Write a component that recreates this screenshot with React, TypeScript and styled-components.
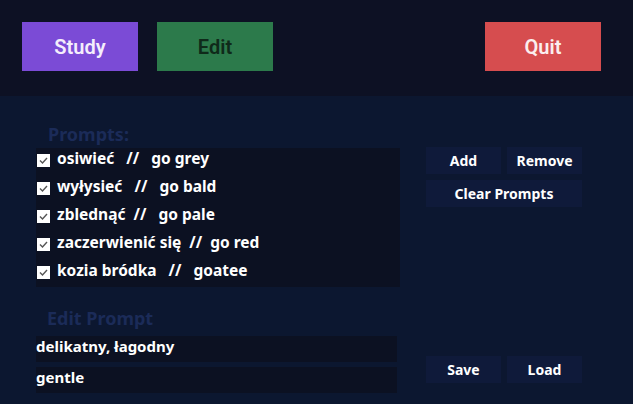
import React from "react";
import styled, { createGlobalStyle } from "styled-components";

const Global = createGlobalStyle`
  html, body { margin: 0; padding: 0; background: #0c1730; }
  body { width: 633px; height: 404px; overflow: hidden; }
  * { box-sizing: border-box; }
`;

const Page = styled.div`
  width: 633px;
  height: 404px;
  display: flex;
  flex-direction: column;
  background: #0c1730;
`;

const TopBar = styled.div`
  height: 96px;
  background: #0d1124;
  display: flex;
  align-items: flex-start;
  padding: 22px 32px 0 22px;
  gap: 19px;
`;

const NavButton = styled.button<{ $bg: string; $fg: string; $push?: boolean }>`
  width: 116px;
  height: 49px;
  border: none;
  background: ${(p) => p.$bg};
  color: ${(p) => p.$fg};
  font-family: Roboto, "Noto Sans", sans-serif;
  font-weight: 600;
  font-size: 20px;
  margin-left: ${(p) => (p.$push ? "auto" : "0")};
  padding: 0;
  cursor: pointer;
`;

const Main = styled.div`
  display: grid;
  grid-template-columns: 364px 156px;
  column-gap: 26px;
  padding-left: 36px;
`;

const Section = styled.div`
  display: flex;
  flex-direction: column;
`;

const SectionLabel = styled.div<{ $top: number; $left: number }>`
  margin-top: ${(p) => p.$top}px;
  margin-left: ${(p) => p.$left}px;
  height: 24px;
  line-height: 20px;
  font-family: "Noto Sans", sans-serif;
  font-weight: 700;
  font-size: 18px;
  color: #1b2b58;
`;

const ListBox = styled.div`
  width: 364px;
  height: 139px;
  background: #0c1122;
  display: flex;
  flex-direction: column;
  gap: 4px;
`;

const Row = styled.label`
  height: 24px;
  display: flex;
  align-items: center;
  gap: 7px;
  padding-left: 1px;
  padding-bottom: 4px;
  font-family: "Noto Sans", sans-serif;
  font-weight: 700;
  font-size: 15.5px;
  color: #ffffff;
  white-space: pre;
`;

const Check = styled.span`
  width: 13px;
  height: 13px;
  background: #ffffff;
  display: inline-flex;
  align-items: center;
  justify-content: center;
  flex: none;
  margin-top: 5px;
`;

const ButtonCol = styled.div<{ $top: number }>`
  padding-top: ${(p) => p.$top}px;
  display: grid;
  grid-template-columns: 75px 75px;
  column-gap: 6px;
  row-gap: 6px;
  align-content: start;
`;

const SmallButton = styled.button<{ $wide?: boolean }>`
  height: 27px;
  border: none;
  padding: 0 0 1px 0;
  background: #0f1a3a;
  color: #ffffff;
  font-family: "Noto Sans", sans-serif;
  font-weight: 700;
  font-size: 14px;
  grid-column: ${(p) => (p.$wide ? "1 / span 2" : "auto")};
`;

const Input = styled.input`
  width: 361px;
  height: 26px;
  border: none;
  outline: none;
  background: #0c1122;
  color: #ffffff;
  padding: 0 0 7px 0;
  font-family: "Noto Sans", sans-serif;
  font-weight: 700;
  font-size: 15px;
`;

const Inputs = styled.div`
  display: flex;
  flex-direction: column;
  gap: 5px;
  margin-top: 4px;
`;

const CheckIcon = () => (
  <svg width="11" height="11" viewBox="0 0 11 11">
    <path d="M2 5.5 L4.5 8 L9 3" fill="none" stroke="#555" strokeWidth="1.4" />
  </svg>
);

const prompts = [
  "osiwie\u0107   //   go grey",
  "wy\u0142ysie\u0107   //   go bald",
  "zbledn\u0105\u0107  //   go pale",
  "zaczerwieni\u0107 si\u0119  //  go red",
  "kozia br\u00f3dka   //   goatee",
];

export default function App() {
  return (
    <Page>
      <Global />
      <TopBar>
        <NavButton $bg="#7b4bd6" $fg="#f4eefc">Study</NavButton>
        <NavButton $bg="#2c7a4b" $fg="#0f2a1a">Edit</NavButton>
        <NavButton $bg="#d64d4f" $fg="#fbeeee" $push>Quit</NavButton>
      </TopBar>
      <Main>
        <Section>
          <SectionLabel $top={28} $left={12}>Prompts:</SectionLabel>
          <ListBox>
            {prompts.map((p) => (
              <Row key={p}>
                <Check>
                  <CheckIcon />
                </Check>
                {p}
              </Row>
            ))}
          </ListBox>
        </Section>
        <ButtonCol $top={51}>
          <SmallButton>Add</SmallButton>
          <SmallButton>Remove</SmallButton>
          <SmallButton $wide>Clear Prompts</SmallButton>
        </ButtonCol>
        <Section>
          <SectionLabel $top={21} $left={11}>Edit Prompt</SectionLabel>
          <Inputs>
            <Input defaultValue={"delikatny, \u0142agodny"} />
            <Input defaultValue="gentle" />
          </Inputs>
        </Section>
        <ButtonCol $top={69}>
          <SmallButton>Save</SmallButton>
          <SmallButton>Load</SmallButton>
        </ButtonCol>
      </Main>
    </Page>
  );
}
